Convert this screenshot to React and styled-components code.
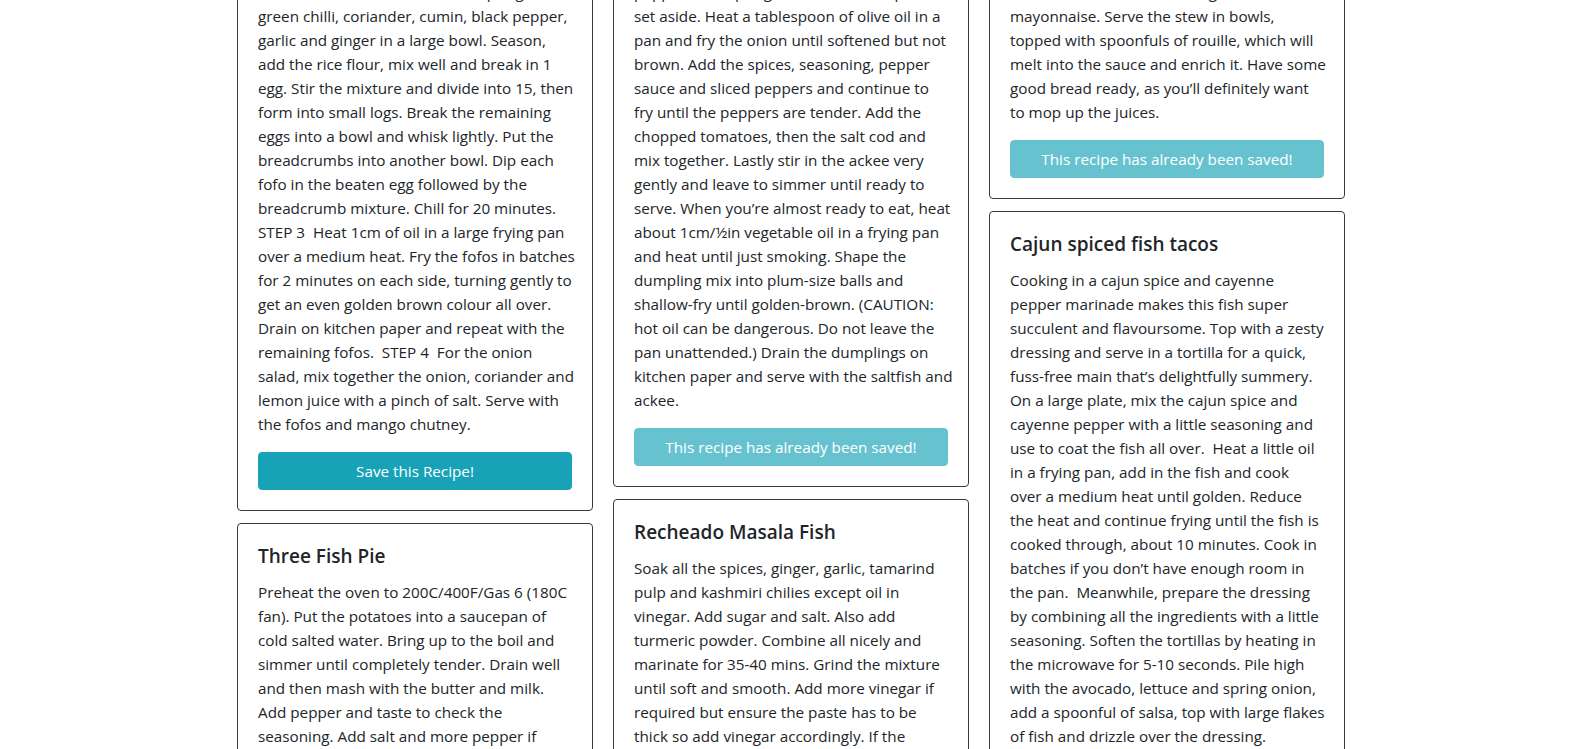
import React from 'react';
import styled, { createGlobalStyle } from 'styled-components';

const GlobalStyle = createGlobalStyle`
  html, body {
    margin: 0;
    padding: 0;
    background: #ffffff;
  }
  body {
    font-family: 'Open Sans', 'Noto Sans', sans-serif;
    font-size: 16px;
    line-height: 1.5;
    color: #212529;
  }
`;

const Page = styled.div`
  height: 100vh;
  overflow: hidden;
`;

const CardColumns = styled.div`
  display: grid;
  grid-template-columns: repeat(3, 356px);
  column-gap: 20px;
  align-items: start;
  margin: -41px 0 0 237px;
`;

const Column = styled.div`
  display: flex;
  flex-direction: column;
  gap: 12px;
`;

const Card = styled.div`
  border: 1px solid #343a40;
  border-radius: 4px;
  background: #ffffff;
`;

const CardBody = styled.div`
  padding: 20px;
`;

const CardTitle = styled.h5`
  margin: 0 0 12px;
  font-size: 19px;
  font-weight: 600;
  line-height: 24px;
  color: #212529;
`;

const CardText = styled.p`
  margin: 0 0 16px;
  font-size: 15.25px;
  line-height: 24px;
`;

const Line = styled.span`
  display: block;
  white-space: pre;
`;

const SaveButton = styled.button`
  display: block;
  width: 100%;
  padding: 6px 12px;
  font-family: inherit;
  font-size: 15.25px;
  line-height: 24px;
  color: #ffffff;
  background: #17a2b8;
  border: 1px solid #17a2b8;
  border-radius: 4px;
  text-align: center;
  cursor: pointer;

  &:disabled {
    opacity: 0.65;
    cursor: default;
  }
`;

const columns = [
  [
    {
      saved: false,
      lines: [
        'STEP 2  Put the salt fish, onion, spring onion,',
        'green chilli, coriander, cumin, black pepper,',
        'garlic and ginger in a large bowl. Season,',
        'add the rice flour, mix well and break in 1',
        'egg. Stir the mixture and divide into 15, then',
        'form into small logs. Break the remaining',
        'eggs into a bowl and whisk lightly. Put the',
        'breadcrumbs into another bowl. Dip each',
        'fofo in the beaten egg followed by the',
        'breadcrumb mixture. Chill for 20 minutes.',
        'STEP 3  Heat 1cm of oil in a large frying pan',
        'over a medium heat. Fry the fofos in batches',
        'for 2 minutes on each side, turning gently to',
        'get an even golden brown colour all over.',
        'Drain on kitchen paper and repeat with the',
        'remaining fofos.  STEP 4  For the onion',
        'salad, mix together the onion, coriander and',
        'lemon juice with a pinch of salt. Serve with',
        'the fofos and mango chutney.',
      ],
    },
    {
      title: 'Three Fish Pie',
      saved: false,
      lines: [
        'Preheat the oven to 200C/400F/Gas 6 (180C',
        'fan). Put the potatoes into a saucepan of',
        'cold salted water. Bring up to the boil and',
        'simmer until completely tender. Drain well',
        'and then mash with the butter and milk.',
        'Add pepper and taste to check the',
        'seasoning. Add salt and more pepper if',
        'necessary.',
      ],
    },
  ],
  [
    {
      saved: true,
      lines: [
        'peppers and spring onions, then chop and',
        'set aside. Heat a tablespoon of olive oil in a',
        'pan and fry the onion until softened but not',
        'brown. Add the spices, seasoning, pepper',
        'sauce and sliced peppers and continue to',
        'fry until the peppers are tender. Add the',
        'chopped tomatoes, then the salt cod and',
        'mix together. Lastly stir in the ackee very',
        'gently and leave to simmer until ready to',
        'serve. When you\u2019re almost ready to eat, heat',
        'about 1cm/\u00bdin vegetable oil in a frying pan',
        'and heat until just smoking. Shape the',
        'dumpling mix into plum-size balls and',
        'shallow-fry until golden-brown. (CAUTION:',
        'hot oil can be dangerous. Do not leave the',
        'pan unattended.) Drain the dumplings on',
        'kitchen paper and serve with the saltfish and',
        'ackee.',
      ],
    },
    {
      title: 'Recheado Masala Fish',
      saved: false,
      lines: [
        'Soak all the spices, ginger, garlic, tamarind',
        'pulp and kashmiri chilies except oil in',
        'vinegar. Add sugar and salt. Also add',
        'turmeric powder. Combine all nicely and',
        'marinate for 35-40 mins. Grind the mixture',
        'until soft and smooth. Add more vinegar if',
        'required but ensure the paste has to be',
        'thick so add vinegar accordingly. If the',
        'paste is too thin it will not stick.',
      ],
    },
  ],
  [
    {
      saved: true,
      lines: [
        'To make the rouille, stir the garlic into the',
        'mayonnaise. Serve the stew in bowls,',
        'topped with spoonfuls of rouille, which will',
        'melt into the sauce and enrich it. Have some',
        'good bread ready, as you\u2019ll definitely want',
        'to mop up the juices.',
      ],
    },
    {
      title: 'Cajun spiced fish tacos',
      saved: false,
      lines: [
        'Cooking in a cajun spice and cayenne',
        'pepper marinade makes this fish super',
        'succulent and flavoursome. Top with a zesty',
        'dressing and serve in a tortilla for a quick,',
        'fuss-free main that\u2019s delightfully summery.',
        'On a large plate, mix the cajun spice and',
        'cayenne pepper with a little seasoning and',
        'use to coat the fish all over.  Heat a little oil',
        'in a frying pan, add in the fish and cook',
        'over a medium heat until golden. Reduce',
        'the heat and continue frying until the fish is',
        'cooked through, about 10 minutes. Cook in',
        'batches if you don\u2019t have enough room in',
        'the pan.  Meanwhile, prepare the dressing',
        'by combining all the ingredients with a little',
        'seasoning. Soften the tortillas by heating in',
        'the microwave for 5-10 seconds. Pile high',
        'with the avocado, lettuce and spring onion,',
        'add a spoonful of salsa, top with large flakes',
        'of fish and drizzle over the dressing.',
      ],
    },
  ],
];

function RecipeCard({ title, lines, saved }) {
  return (
    <Card>
      <CardBody>
        {title && <CardTitle>{title}</CardTitle>}
        <CardText>
          {lines.map((line, i) => (
            <Line key={i}>{line}</Line>
          ))}
        </CardText>
        <SaveButton disabled={saved}>
          {saved ? 'This recipe has already been saved!' : 'Save this Recipe!'}
        </SaveButton>
      </CardBody>
    </Card>
  );
}

export default function App() {
  return (
    <Page>
      <GlobalStyle />
      <CardColumns>
        {columns.map((cards, c) => (
          <Column key={c}>
            {cards.map((card, i) => (
              <RecipeCard key={i} {...card} />
            ))}
          </Column>
        ))}
      </CardColumns>
    </Page>
  );
}
